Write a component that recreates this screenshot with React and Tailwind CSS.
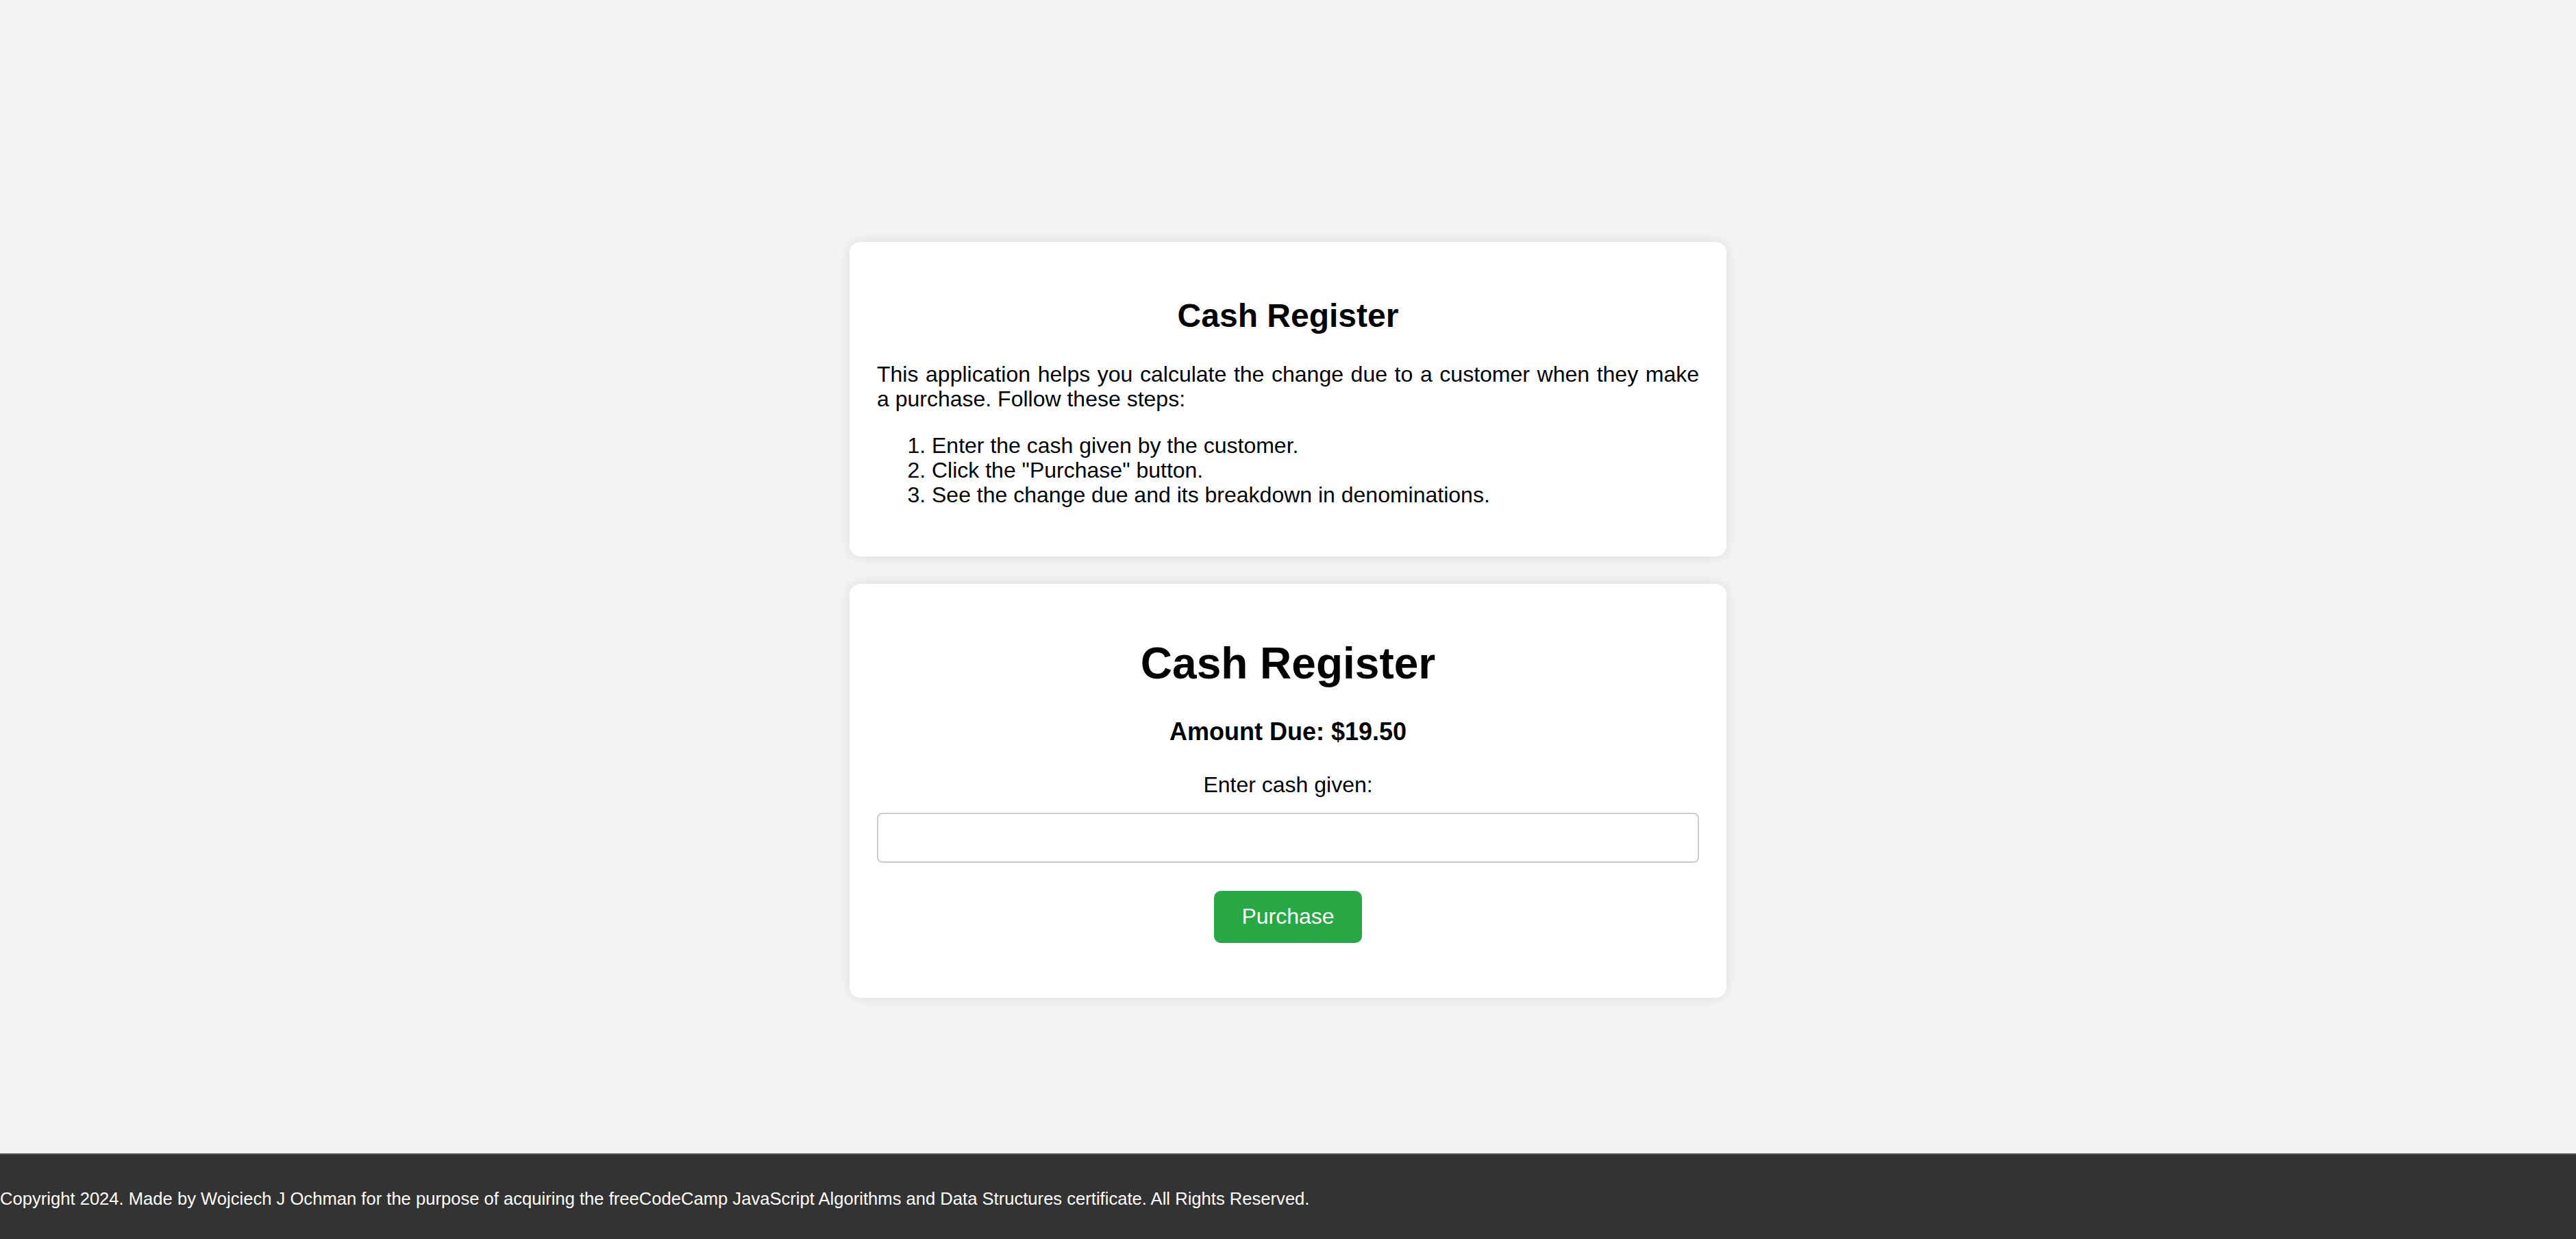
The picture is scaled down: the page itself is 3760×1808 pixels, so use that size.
import React from "react";

export default function App() {
  return (
    <div
      className="flex h-screen w-full flex-col bg-[#f4f4f4] text-black"
      style={{ fontFamily: '"Liberation Sans", Arial, sans-serif' }}
    >
      <main className="flex flex-1 flex-col items-center justify-center pt-[125px]">
        <section className="w-[1280px] rounded-[16px] bg-white px-[40px] pt-[40px] pb-[40px] shadow-[0_0_20px_rgba(0,0,0,0.1)]">
          <h2 className="mt-[40px] text-center text-[48px] font-bold leading-[55px]">
            Cash Register
          </h2>
          <p className="mt-[40px] text-justify text-[32px] leading-[36px]">
            This application helps you calculate the change due to a customer when they make a
            purchase. Follow these steps:
          </p>
          <ol className="mt-[32px] mb-[32px] list-decimal pl-[80px] text-[32px] leading-[36px]">
            <li>Enter the cash given by the customer.</li>
            <li>Click the "Purchase" button.</li>
            <li>See the change due and its breakdown in denominations.</li>
          </ol>
        </section>

        <section className="mt-[40px] flex w-[1280px] flex-col items-center rounded-[16px] bg-white px-[40px] pt-[40px] pb-[80px] shadow-[0_0_20px_rgba(0,0,0,0.1)]">
          <h1 className="mt-[39px] text-center text-[64px] font-bold leading-[74px]">
            Cash Register
          </h1>
          <h3 className="mt-[42px] text-center text-[36px] font-bold leading-[42px]">
            Amount Due: $19.50
          </h3>
          <label
            htmlFor="cash"
            className="mt-[38px] block text-center text-[32px] leading-[37px]"
          >
            Enter cash given:
          </label>
          <input
            id="cash"
            type="number"
            className="mt-[22px] h-[73px] w-full rounded-[8px] border-2 border-[#cccccc] bg-white px-[20px] text-[32px] outline-none"
          />
          <button
            type="button"
            className="mt-[41px] h-[76px] rounded-[10px] bg-[#28a745] px-[40px] text-[32px] leading-[37px] text-white"
          >
            Purchase
          </button>
        </section>
      </main>

      <footer className="flex h-[125px] shrink-0 items-center border-t-2 border-[#555555] bg-[#333333] pt-[4px] text-[25.6px] leading-[30px] text-white">
        <p>
          Copyright 2024. Made by Wojciech J Ochman for the purpose of acquiring the freeCodeCamp
          JavaScript Algorithms and Data Structures certificate. All Rights Reserved.
        </p>
      </footer>
    </div>
  );
}
